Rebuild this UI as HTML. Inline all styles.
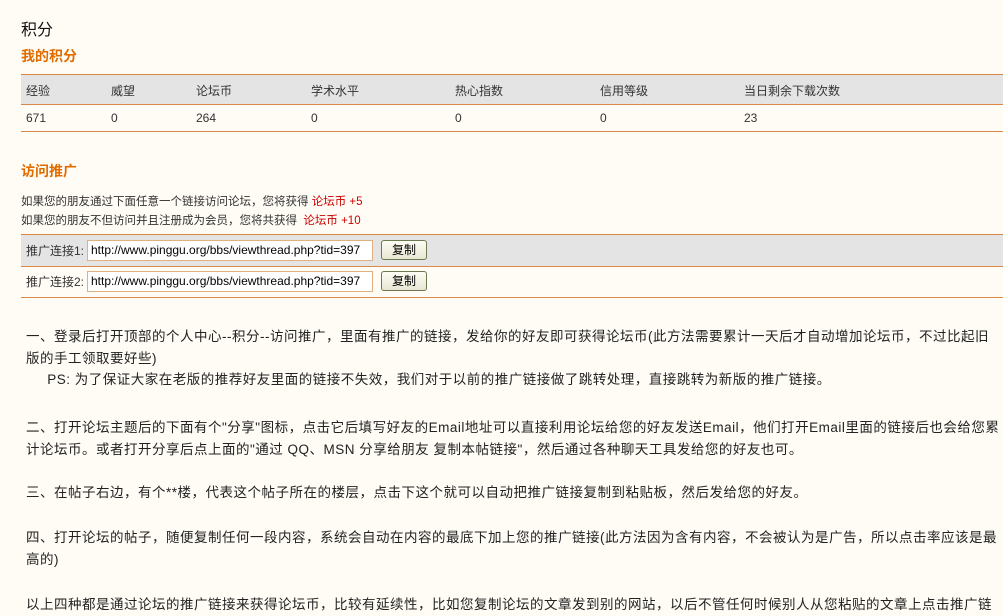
<!DOCTYPE html>
<html><head><meta charset="utf-8"><style>
body{margin:0;background:#fffcf6;font-family:"Liberation Sans","Noto Sans CJK SC",sans-serif;color:#333;width:1003px;height:613px;overflow:hidden;position:relative;font-size:12px}
.a{position:absolute;white-space:nowrap}
.h{color:#e06c00;font-weight:bold;font-size:14px}
.row{position:absolute;left:21px;width:982px}
.row span{position:absolute;top:7px}
.in{position:absolute;width:281px;height:19px;border:1px solid #e0b080;background:#fff;font-size:12px;line-height:19px;padding-left:3px;color:#000;overflow:hidden}
.btn{position:absolute;width:44px;height:18px;border:1px solid #6b7a50;border-radius:3px;background:linear-gradient(#fdfdf4,#e8e6d2);text-align:center;line-height:18px;font-size:12px;color:#000}
.p{position:absolute;left:26px;width:990px;font-size:13.5px;line-height:21.5px;color:#222;white-space:nowrap;letter-spacing:0.5px}
.r{color:#c00}
</style></head><body>
<div class="a" style="left:21px;top:16px;font-size:16px;color:#111">积分</div>
<div class="a h" style="left:21px;top:46px">我的积分</div>
<div class="row" style="top:74px;height:29px;background:#e4e4e4;border-top:1px solid #d9884a;border-bottom:1px solid #d9884a">
<span style="left:5px">经验</span><span style="left:90px">威望</span><span style="left:175px">论坛币</span><span style="left:290px">学术水平</span><span style="left:434px">热心指数</span><span style="left:579px">信用等级</span><span style="left:723px">当日剩余下载次数</span></div>
<div class="row" style="top:104px;height:27px;border-bottom:1px solid #d9884a">
<span style="left:5px">671</span><span style="left:90px">0</span><span style="left:175px">264</span><span style="left:290px">0</span><span style="left:434px">0</span><span style="left:579px">0</span><span style="left:723px">23</span></div>
<div class="a h" style="left:21px;top:161px">访问推广</div>
<div class="a" style="left:21px;top:193px;font-size:11.5px">如果您的朋友通过下面任意一个链接访问论坛，您将获得 <span class="r">论坛币 +5</span></div>
<div class="a" style="left:21px;top:212px;font-size:11.5px">如果您的朋友不但访问并且注册成为会员，您将共获得 &nbsp;<span class="r">论坛币 +10</span></div>
<div class="row" style="top:234px;height:31px;background:#e4e4e4;border-top:1px solid #d9884a;border-bottom:1px solid #d9884a">
<span style="left:5px;top:7px">推广连接1:</span><div class="in" style="left:66px;top:5px">http://www.pinggu.org/bbs/viewthread.php?tid=397</div><div class="btn" style="left:360px;top:5px">复制</div></div>
<div class="row" style="top:266px;height:31px;border-bottom:1px solid #d9884a">
<span style="left:5px;top:7px">推广连接2:</span><div class="in" style="left:66px;top:5px">http://www.pinggu.org/bbs/viewthread.php?tid=397</div><div class="btn" style="left:360px;top:5px">复制</div></div>
<div class="p" style="top:326px">一、登录后打开顶部的个人中心--积分--访问推广，里面有推广的链接，发给你的好友即可获得论坛币(此方法需要累计一天后才自动增加论坛币，不过比起旧<br>版的手工领取要好些)<br>&nbsp;&nbsp;&nbsp;&nbsp;&nbsp;PS: 为了保证大家在老版的推荐好友里面的链接不失效，我们对于以前的推广链接做了跳转处理，直接跳转为新版的推广链接。</div>
<div class="p" style="top:417px">二、打开论坛主题后的下面有个"分享"图标，点击它后填写好友的Email地址可以直接利用论坛给您的好友发送Email，他们打开Email里面的链接后也会给您累<br>计论坛币。或者打开分享后点上面的"通过 QQ、MSN 分享给朋友 复制本帖链接"，然后通过各种聊天工具发给您的好友也可。</div>
<div class="p" style="top:482px">三、在帖子右边，有个**楼，代表这个帖子所在的楼层，点击下这个就可以自动把推广链接复制到粘贴板，然后发给您的好友。</div>
<div class="p" style="top:527px">四、打开论坛的帖子，随便复制任何一段内容，系统会自动在内容的最底下加上您的推广链接(此方法因为含有内容，不会被认为是广告，所以点击率应该是最<br>高的)</div>
<div class="p" style="top:594px">以上四种都是通过论坛的推广链接来获得论坛币，比较有延续性，比如您复制论坛的文章发到别的网站，以后不管任何时候别人从您粘贴的文章上点击推广链</div>
</body></html>
